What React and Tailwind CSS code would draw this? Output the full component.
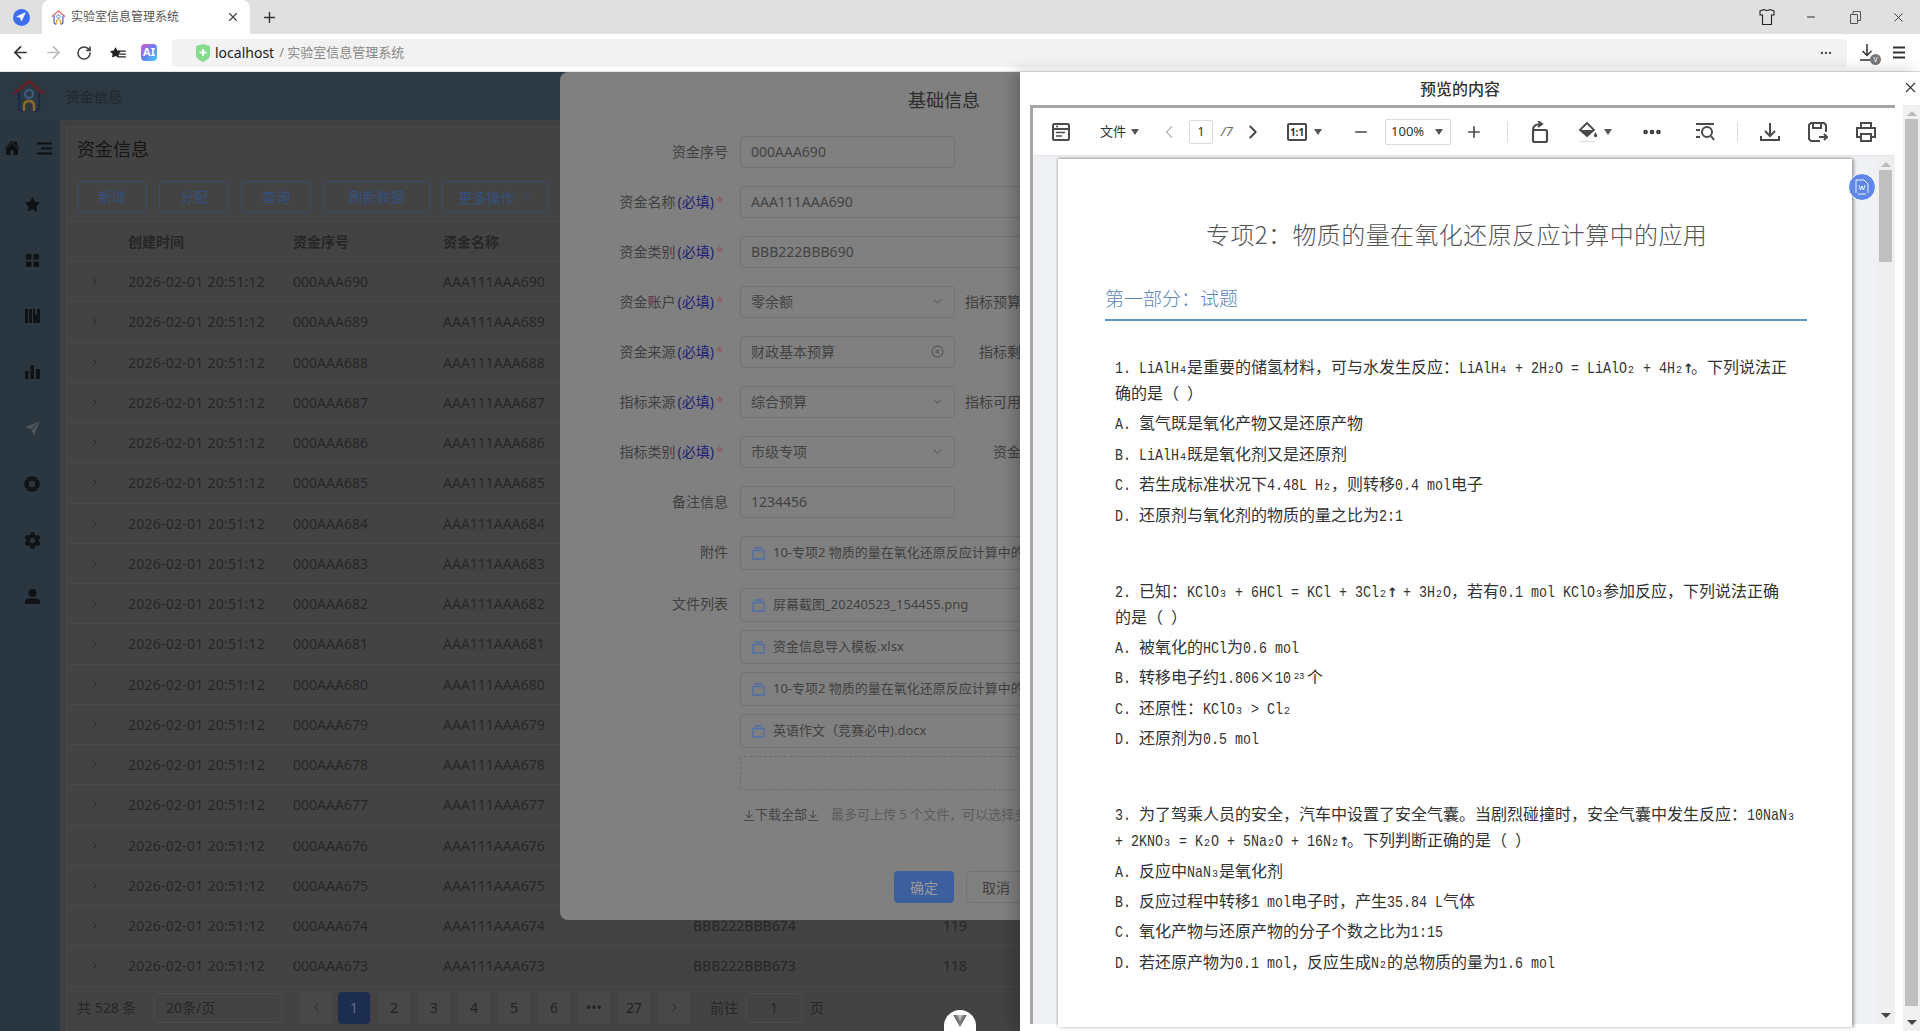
import { ArrowLeft, ArrowRight, RotateCw, Plus, X, ChevronDown, ChevronRight, ChevronLeft, Minus, Navigation, Ellipsis, CircleX, Menu } from 'lucide-react';
import { FaStar, FaCog } from 'react-icons/fa';
import { IoHome, IoPaperPlane } from 'react-icons/io5';
import { BsGridFill } from 'react-icons/bs';

const uiFont = 'font-["Noto_Sans","Noto_Sans_CJK_SC",sans-serif]';
const rows = Array.from({ length: 18 }, (_, i) => 690 - i);
const pages = ['2', '3', '4', '5', '6', '•••', '27'];

function Logo({ size = 34, dim = false }) {
  const c = dim ? ['#6b1f22', '#1c2a52', '#8a6a2a', '#3c5878'] : ['#e04545', '#3050a0', '#e8a030', '#7aa5d5'];
  return (
    <svg width={size} height={size} viewBox="0 0 34 34" fill="none" strokeWidth="2.4">
      <path d="M2 15 17 2l15 13" stroke={c[0]} />
      <path d="M7 13v15q0 4 5 4M27 13v15q0 4-5 4" stroke={c[1]} />
      <circle cx="17" cy="15" r="4" stroke={c[3]} />
      <path d="M12 32v-5q0-5 5-5t5 5v5" stroke={c[2]} />
    </svg>
  );
}

function BrowserChrome() {
  return (
    <div className="shrink-0">
      <div className="flex h-[34px] items-end bg-[#e0e0e0]">
        <div className="flex h-[34px] w-[42px] items-center justify-center">
          <div className="flex h-[17px] w-[17px] items-center justify-center rounded-full bg-[#3d6df0]">
            <Navigation className="h-[10px] w-[10px] fill-white text-white" />
          </div>
        </div>
        <div className="flex h-[34px] w-[208px] items-center rounded-t-[8px] bg-white pl-[9px] pr-[10px]">
          <Logo size={15} />
          <span className="ml-[5px] flex-1 text-[12px] text-[#555]">实验室信息管理系统</span>
          <X className="h-[14px] w-[14px] text-[#444]" />
        </div>
        <div className="flex h-[34px] w-[38px] items-center justify-center">
          <Plus className="h-[17px] w-[17px] text-[#333]" />
        </div>
        <div className="flex-1" />
        <div className="flex h-[34px] items-center text-[#333]">
          <svg width="16" height="18" viewBox="0 0 16 18" fill="none" stroke="#222" strokeWidth="1.1" className="mr-[30px]">
            <path d="M5 1.5 1 3v4h2.5v9.5h9V7H15V3l-4-1.5q-3 2-6 0Z" />
          </svg>
          <Minus className="mr-[33px] h-[12px] w-[12px]" />
          <svg width="11" height="13" viewBox="0 0 11 13" fill="none" stroke="#555" className="mr-[30px]">
            <path d="M.5 3.5h7v9h-7zM3 3.5v-3h7.500v9h-3" />
          </svg>
          <X className="mr-[14px] h-[15px] w-[15px]" strokeWidth={1.5} />
        </div>
      </div>
      <div className="flex h-[37px] items-center bg-white">
        <div className="flex w-[172px] items-center pl-[11px]">
          <ArrowLeft className="h-[19px] w-[19px] text-[#333]" strokeWidth={2.2} />
          <ArrowRight className="ml-[14px] h-[19px] w-[19px] text-[#bbb]" strokeWidth={2.2} />
          <RotateCw className="ml-[13px] h-[16px] w-[16px] text-[#444]" strokeWidth={2.4} />
          <span className="relative ml-[18px] flex h-[16px] w-[16px] items-center">
            <FaStar className="h-[11px] w-[11px] text-[#222]" />
            <Menu className="absolute left-[7px] top-[4px] h-[10px] w-[10px] text-[#222]" strokeWidth={3} />
          </span>
          <span className="ml-[15px] flex h-[17px] w-[16px] items-center justify-center rounded-[4px] bg-gradient-to-br from-[#d050d0] via-[#6080f0] to-[#40d0f0] text-[11px] font-bold text-white">AI</span>
        </div>
        <div className="flex h-[28px] w-[1675px] items-center justify-between rounded-[4px] bg-[#f2f2f2] pl-[24px] pr-[14px]">
          <div className="flex items-center">
            <svg width="14" height="18" viewBox="0 0 14 18" className="mr-[5px]">
              <path d="M0 2 7 0l7 2v9q0 4-7 7-7-3-7-7Z" fill="#86dc8e" />
              <path d="M7 5v7M3.500 8.500h7" stroke="#fff" strokeWidth="2" />
            </svg>
            <span className="text-[14px] text-[#222]">localhost</span>
            <span className="ml-[5px] text-[13px] text-[#888]">/ 实验室信息管理系统</span>
          </div>
          <Ellipsis className="h-[14px] w-[14px] text-[#444]" />
        </div>
        <div className="relative ml-[12px] h-[20px] w-[20px]">
          <svg width="18" height="20" viewBox="0 0 18 20" fill="none" stroke="#333" strokeWidth="1.500">
            <path d="M8 1v11M3.500 8 8 12.500 12.500 8M1 17h10" />
          </svg>
          <span className="absolute bottom-[-2px] right-[-2px] flex h-[11px] w-[11px] items-center justify-center rounded-full bg-[#777] text-[8px] leading-none text-white">v</span>
        </div>
        <svg width="14" height="13" viewBox="0 0 14 13" stroke="#333" strokeWidth="2" className="ml-[13px]">
          <path d="M1 1.500h12M1 6.500h12M1 11.500h12" />
        </svg>
      </div>
      <div className="h-[1px] bg-[#e4e4e4]" />
    </div>
  );
}

function Sidebar() {
  const icon = 'flex h-[56px] w-full items-center justify-center pl-[4px] text-[#0f1316]';
  return (
    <div className="w-[60px] shrink-0 bg-[#2b3740]">
      <div className="flex h-[56px] items-center pl-[4px]">
        <IoHome className="h-[16px] w-[16px] text-[#0c1013]" />
        <svg width="15" height="13" viewBox="0 0 15 13" stroke="#0c1013" strokeWidth="2" className="ml-[17px]">
          <path d="M0 1.500h15M4 6.500h11M0 11.500h15" />
        </svg>
      </div>
      <div className={icon}><FaStar className="h-[15px] w-[15px]" /></div>
      <div className={icon}><BsGridFill className="h-[15px] w-[15px]" /></div>
      <div className={icon}>
        <svg width="15" height="14" viewBox="0 0 15 14" fill="currentColor"><path d="M0 0h3v14H0zM4 0h3v14H4zM8 0h2v6l1-1 1 1V0h3v14H8z" /></svg>
      </div>
      <div className={icon}>
        <svg width="15" height="14" viewBox="0 0 15 14" fill="currentColor"><path d="M0 6h3.500v8H0zM5.500 0H9v14H5.500zM11 4h4v10h-4z" /></svg>
      </div>
      <div className={icon}><IoPaperPlane className="h-[15px] w-[15px] text-[#4b555d]" /></div>
      <div className={icon}>
        <svg width="16" height="16" viewBox="0 0 16 16" fill="none">
          <circle cx="8" cy="8" r="5.500" stroke="currentColor" strokeWidth="4.500" />
          <path d="m2.500 2.500 2 2M13.500 2.500l-2 2M2.500 13.500l2-2M13.500 13.500l-2-2" stroke="#2b3740" strokeWidth="0.800" />
        </svg>
      </div>
      <div className={icon}><FaCog className="h-[17px] w-[17px]" /></div>
      <div className={icon}>
        <svg width="15" height="15" viewBox="0 0 15 15" fill="currentColor"><circle cx="7.500" cy="4" r="4" /><path d="M0 15v-2q0-3.500 4-3.500h7q4 0 4 3.500v2z" /></svg>
      </div>
    </div>
  );
}

function TableArea() {
  const buttons = [['新增', 'w-[70px]'], ['分配', 'w-[70px]'], ['查询', 'w-[70px]'], ['刷新数据', 'w-[107px]']];
  const grid = 'grid grid-cols-[61px_165px_150px_250px_250px_300px] items-center';
  return (
    <div className="flex min-w-0 flex-1 flex-col bg-[#404040] pl-[6px] pt-[6px]">
      <div className="flex flex-1 flex-col border-l border-t border-[#484848] bg-[#434343]">
        <div className="pl-[10px] pt-[9px]">
          <h1 className="text-[18px] leading-[27px] text-[#161616]">资金信息</h1>
          <div className="mt-[18px] flex gap-[12px]">
            {buttons.map(([b, w]) => (
              <div key={b} className={`flex h-[32px] ${w} items-center justify-center rounded-[4px] border border-[#3b4d69] pb-[1px] text-[14px] text-[#34517f]`}>{b}</div>
            ))}
            <div className="flex h-[32px] w-[107px] items-center justify-center gap-[6px] rounded-[4px] border border-[#3b4d69] text-[14px] text-[#34517f]">
              更多操作<ChevronDown className="h-[12px] w-[12px]" />
            </div>
          </div>
        </div>
        <div className="mt-[8px] border-t border-[#494949]">
          <div className={`${grid} h-[40px] border-b border-[#494949] text-[14px] font-bold text-[#262626]`}>
            <span />
            <span>创建时间</span>
            <span>资金序号</span>
            <span>资金名称</span>
            <span>资金类别</span>
            <span>序号</span>
          </div>
          {rows.map((n) => (
            <div key={n} className={`${grid} h-[40.25px] border-b border-[#494949] text-[14px] text-[#262626]`}>
              <ChevronRight className="ml-[21px] h-[13px] w-[13px] text-[#222]" strokeWidth={1.5} />
              <span className="whitespace-nowrap tracking-[0.25px]">2026-02-01 20:51:12</span>
              <span>000AAA{n}</span>
              <span>AAA111AAA{n}</span>
              <span>BBB222BBB{n}</span>
              <span>{n - 555}</span>
            </div>
          ))}
        </div>
        <div className="mt-[5px] flex h-[32px] items-center pl-[10px] text-[14px] text-[#262626]">
          <span className="w-[77px] whitespace-nowrap">共 528 条</span>
          <div className="flex h-[30px] w-[128px] items-center justify-between rounded-[4px] border border-[#4c4c4c] px-[11px]">
            20条/页<ChevronDown className="h-[12px] w-[12px] text-[#333]" />
          </div>
          <div className="ml-[18px] flex h-[32px] w-[32px] items-center justify-center rounded-sm bg-[#484848]"><ChevronLeft className="h-[13px] w-[13px] text-[#333]" /></div>
          <div className="ml-[6px] flex h-[32px] w-[32px] items-center justify-center rounded-sm bg-[#1d2d50] text-[#5d6d8d]">1</div>
          {pages.map((p) => (
            <div key={p} className="ml-[8px] flex h-[32px] w-[32px] items-center justify-center rounded-sm bg-[#484848] text-[#222]">{p}</div>
          ))}
          <div className="ml-[8px] flex h-[32px] w-[32px] items-center justify-center rounded-sm bg-[#484848]"><ChevronRight className="h-[13px] w-[13px] text-[#333]" /></div>
          <span className="ml-[20px]">前往</span>
          <div className="ml-[8px] flex h-[30px] w-[56px] items-center justify-center rounded-[4px] border border-[#4c4c4c]">1</div>
          <span className="ml-[8px]">页</span>
        </div>
      </div>
    </div>
  );
}

function Field({ label, required, children }) {
  return (
    <div className="flex items-start">
      <div className="flex h-[32px] w-[168px] shrink-0 items-center justify-end whitespace-nowrap pb-[2px] text-[14px] text-[#3f3f3f]">
        {label}
        {required && <span className="ml-[2px] text-[#1f1f7c]">(必填)</span>}
        {required && <span className="ml-[2px] w-[12px] text-[#8e5a5a]">*</span>}
      </div>
      <div className="ml-[12px] min-w-0 flex-1">{children}</div>
    </div>
  );
}

const box = 'flex h-[32px] items-center rounded-[4px] border border-[#737373] px-[10px] pb-[2px] text-[14px] text-[#434343]';

function Side({ pad, text }) {
  return <div className={`whitespace-nowrap ${pad} pb-[2px] text-[14px] text-[#3f3f3f]`}>{text}</div>;
}

function Half({ children, focus, icon }) {
  return (
    <div className={`${box} w-[215px] justify-between ${focus ? 'border-[#5c5c5c]' : ''}`}>
      <span>{children}</span>
      {icon ?? <ChevronDown className="h-[13px] w-[13px] text-[#5e5e5e]" />}
    </div>
  );
}

function FileItem({ name }) {
  return (
    <div className="flex h-[34px] items-center rounded-[4px] border border-[#737373] pl-[11px] text-[13px] text-[#404040]">
      <svg width="13" height="13" viewBox="0 0 13 13" fill="none" stroke="#4e6ea8" strokeWidth="1.300" className="mr-[8px] shrink-0">
        <path d="M1 3.500h11V12H1zM2.500 1h8" />
      </svg>
      <span className="whitespace-nowrap">{name}</span>
    </div>
  );
}

function DownIcon() {
  return (
    <svg width="10" height="11" viewBox="0 0 10 11" fill="none" stroke="#454545" className="shrink-0">
      <path d="M5 0v7.500M1.500 4.500 5 8l3.500-3.500M0 10.500h10" />
    </svg>
  );
}

function FormDialog() {
  const longName = '10-专项2 物质的量在氧化还原反应计算中的应用.pdf';
  return (
    <div className="absolute left-[560px] top-[72px] h-[848px] w-[768px] rounded-[8px] bg-[#808080]">
      <div className="h-[64px] pt-[16px] text-center text-[18px] leading-[24px] text-[#2c2c2c]">基础信息</div>
      <div className="flex flex-col gap-[18px]">
        <Field label="资金序号"><div className={`${box} w-[215px]`}>000AAA690</div></Field>
        <Field label="资金名称" required><div className={box}>AAA111AAA690</div></Field>
        <Field label="资金类别" required><div className={box}>BBB222BBB690</div></Field>
        <Field label="资金账户" required>
          <div className="flex items-center"><Half>零余额</Half><Side pad="pl-[10px]" text="指标预算金额" /></div>
        </Field>
        <Field label="资金来源" required>
          <div className="flex items-center">
            <Half focus icon={<CircleX className="h-[13px] w-[13px] text-[#555]" />}>财政基本预算</Half>
            <Side pad="pl-[24px]" text="指标剩余金额" />
          </div>
        </Field>
        <Field label="指标来源" required>
          <div className="flex items-center"><Half>综合预算</Half><Side pad="pl-[10px]" text="指标可用金额" /></div>
        </Field>
        <Field label="指标类别" required>
          <div className="flex items-center"><Half>市级专项</Half><Side pad="pl-[38px]" text="资金余额" /></div>
        </Field>
        <Field label="备注信息"><div className={`${box} w-[215px]`}>1234456</div></Field>
        <Field label="附件"><FileItem name={longName} /></Field>
      </div>
      <div className="mt-[18px]">
        <Field label="文件列表">
          <div className="flex flex-col gap-[8px]">
            <FileItem name="屏幕截图_20240523_154455.png" />
            <FileItem name="资金信息导入模板.xlsx" />
            <FileItem name={longName} />
            <FileItem name="英语作文（竞赛必中).docx" />
            <div className="h-[34px] rounded-[4px] border border-dashed border-[#6e6e6e]" />
          </div>
          <div className="mt-[14px] flex h-[22px] items-center whitespace-nowrap pl-[4px] text-[13px] text-[#5c5c5c]">
            <span className="flex w-[87px] items-center gap-[1px] text-[#454545]"><DownIcon />下载全部<DownIcon /></span>
            最多可上传 5 个文件，可以选择多个文件上传
          </div>
        </Field>
      </div>
      <div className="mt-[45px] flex pl-[334px]">
        <div className="flex h-[32px] w-[60px] items-center justify-center rounded-[4px] bg-[#3e5f9e] text-[14px] text-[#9a9a9a]">确定</div>
        <div className="ml-[12px] flex h-[32px] w-[60px] items-center justify-center rounded-[4px] border border-[#737373] text-[14px] text-[#3f3f3f]">取消</div>
      </div>
    </div>
  );
}

// 宋体半角：拉丁字符单独一段，宽度正好是汉字的一半
function DocText({ text }) {
  const parts = text.match(/[\x20-\x7e]+|[₂₃₄]|²³|↑|[^\x20-\x7e₂₃₄²³↑]+/g) ?? [];
  const subs = { '₂': '2', '₃': '3', '₄': '4' };
  return parts.map((p, i) => {
    if (subs[p]) return <span key={i} className='inline-block w-[8px] text-center font-["Liberation_Mono",monospace] text-[10px] leading-none'>{subs[p]}</span>;
    if (p === '²³') return <span key={i} className='inline-block w-[16px] -translate-y-[4px] text-center font-["Liberation_Mono",monospace] text-[9px] leading-none'>23</span>;
    if (p === '↑') return <span key={i} className='inline-block w-[8px] text-center font-["DejaVu_Sans",sans-serif] text-[13px] font-bold leading-none'>↑</span>;
    if (/^[\x20-\x7e]/.test(p)) return <span key={i} className='inline-block origin-[50%_80%] scale-y-[1.2] font-["Liberation_Mono",monospace] text-[13.33px] leading-none'>{p}</span>;
    return <span key={i}>{p}</span>;
  });
}

const questions = [
  {
    stem: ['1. LiAlH₄是重要的储氢材料，可与水发生反应：LiAlH₄ + 2H₂O = LiAlO₂ + 4H₂↑。下列说法正', '确的是（ ）'],
    opts: ['A. 氢气既是氧化产物又是还原产物', 'B. LiAlH₄既是氧化剂又是还原剂', 'C. 若生成标准状况下4.48L H₂，则转移0.4 mol电子', 'D. 还原剂与氧化剂的物质的量之比为2:1'],
  },
  {
    stem: ['2. 已知：KClO₃ + 6HCl = KCl + 3Cl₂↑ + 3H₂O，若有0.1 mol KClO₃参加反应，下列说法正确', '的是（ ）'],
    opts: ['A. 被氧化的HCl为0.6 mol', 'B. 转移电子约1.806×10²³个', 'C. 还原性：KClO₃ > Cl₂', 'D. 还原剂为0.5 mol'],
  },
  {
    stem: ['3. 为了驾乘人员的安全，汽车中设置了安全气囊。当剧烈碰撞时，安全气囊中发生反应：10NaN₃', '+ 2KNO₃ = K₂O + 5Na₂O + 16N₂↑。下列判断正确的是（ ）'],
    opts: ['A. 反应中NaN₃是氧化剂', 'B. 反应过程中转移1 mol电子时，产生35.84 L气体', 'C. 氧化产物与还原产物的分子个数之比为1:15', 'D. 若还原产物为0.1 mol，反应生成N₂的总物质的量为1.6 mol'],
  },
];

function Tri({ cls = '' }) {
  return <span className={`h-0 w-0 shrink-0 border-x-[4px] border-t-[6px] border-x-transparent border-t-[#555] ${cls}`} />;
}

function ToolIcon({ children, w = 20, h = 20, vb = '0 0 20 20', cls = '' }) {
  return (
    <svg width={w} height={h} viewBox={vb} fill="none" stroke="#4a4a4a" strokeWidth="2" className={`shrink-0 ${cls}`}>
      {children}
    </svg>
  );
}

function PdfToolbar() {
  return (
    <div className="flex h-[48px] items-center border-b border-[#e4e4e4] bg-white pl-[19px] text-[#333]">
      <ToolIcon vb="0 0 18 18" w={18} h={18}>
        <rect x="1" y="1" width="16" height="16" rx="1.500" /><path d="M1 6h16" /><path d="M4 3.500h2M4 9.500h9M4 13h6" strokeWidth="1.500" />
      </ToolIcon>
      <span className="ml-[30px] text-[13px]">文件</span>
      <Tri cls="ml-[5px]" />
      <ChevronLeft className="ml-[20px] h-[20px] w-[20px] text-[#bdbdbd]" strokeWidth={2} />
      <div className="ml-[10px] flex h-[24px] w-[24px] items-center justify-center rounded-[2px] border border-[#dcdcdc] text-[13px]">1</div>
      <span className="ml-[8px] w-[14px] text-[13px] italic text-[#666]">/7</span>
      <ChevronRight className="ml-[7px] h-[22px] w-[22px] text-[#444]" strokeWidth={2} />
      <div className="ml-[23px] flex h-[18px] w-[20px] items-center justify-center rounded-[2px] border-2 border-[#4a4a4a] text-[10px] font-bold leading-none">1:1</div>
      <Tri cls="ml-[7px]" />
      <Minus className="ml-[30px] h-[18px] w-[18px] text-[#4a4a4a]" strokeWidth={2.200} />
      <div className="ml-[15px] flex h-[26px] w-[66px] items-center justify-between rounded-[2px] border border-[#dcdcdc] pl-[5px] pr-[7px] text-[13px]">100%<Tri /></div>
      <Plus className="ml-[14px] h-[18px] w-[18px] text-[#4a4a4a]" strokeWidth={2.200} />
      <div className="ml-[24px] h-[20px] w-[1px] shrink-0 bg-[#dcdcdc]" />
      <ToolIcon w={20} h={22} vb="0 0 20 22" cls="ml-[22px]">
        <rect x="3" y="9" width="14" height="12" rx="1.500" strokeWidth="2.200" /><path d="M3 9q0-6 8-6M8 0l4 3-4 3" />
      </ToolIcon>
      <svg width="20" height="22" viewBox="0 0 20 22" className="ml-[28px] shrink-0">
        <path d="M9 2 2 9l7 6 7-6Z" fill="none" stroke="#4a4a4a" strokeWidth="1.800" /><path d="M2 9h14l-7 6Z" fill="#4a4a4a" /><path d="M17.500 11l1.500 3a1.600 1.600 0 1 1-3 0Z" fill="#4a4a4a" /><path d="M1 20.500h16" stroke="#e4e4ee" strokeWidth="2" />
      </svg>
      <Tri cls="ml-[6px]" />
      <Ellipsis className="ml-[29px] h-[22px] w-[22px] text-[#333]" strokeWidth={3} />
      <ToolIcon cls="ml-[32px]">
        <path d="M1 2h18M1 8h4M1 15h4" /><circle cx="12" cy="10" r="5" /><path d="m16 14 3 4" />
      </ToolIcon>
      <div className="ml-[22px] h-[20px] w-[1px] shrink-0 bg-[#dcdcdc]" />
      <ToolIcon cls="ml-[22px]">
        <path d="M10 1v13M5 9l5 5 5-5M1 14v4h18v-4" />
      </ToolIcon>
      <ToolIcon cls="ml-[28px]">
        <path d="M18 10V3l-2-2H3L1 3v14l2 2h9M5 1v5h8V1M11 15h8M16 12l3 3-3 3" />
      </ToolIcon>
      <ToolIcon cls="ml-[28px]">
        <path d="M5 6V1h10v5M5 15H1V6h18v9h-4" /><path d="M5 12h10v7H5z" />
      </ToolIcon>
    </div>
  );
}

function ScrollTrack({ cls, thumb }) {
  return (
    <div className={`flex flex-col items-center pb-[6px] pt-[6px] ${cls}`}>
      <span className="h-0 w-0 border-x-[5px] border-b-[5px] border-x-transparent border-b-[#bbb]" />
      <div className={`mt-[3px] w-[13px] bg-[#bfbfbf] ${thumb}`} />
      <div className="flex-1" />
      <span className="h-0 w-0 border-x-[5px] border-t-[5px] border-x-transparent border-t-[#444]" />
    </div>
  );
}

function PreviewDrawer() {
  return (
    <div className="absolute bottom-0 left-[1020px] right-0 top-[72px] bg-white pl-[10px] shadow-[-6px_0_14px_rgba(0,0,0,0.22)]">
      <div className="flex h-[33px] w-[860px] items-center justify-center text-[16px] font-medium leading-none text-[#333]">
        预览的内容
      </div>
      <X className="absolute right-[1px] top-[7px] h-[17px] w-[17px] text-[#333]" strokeWidth={1.500} />
      <div className="flex h-[926px]">
        <div className="flex h-[919px] w-[865px] flex-col border-l-[3px] border-t-[3px] border-[#a6a6a6]">
          <PdfToolbar />
          <div className="flex min-h-0 flex-1 bg-[#f0f1f5]">
            <div className="ml-[25px] mt-[3px] h-full w-[794px] overflow-hidden bg-white pl-[47px] pt-[57px] text-[16px] text-[#333] shadow-[2px_0_3px_rgba(0,0,0,0.35),-1px_-1px_2px_rgba(0,0,0,0.2)] font-['Noto_Sans_CJK_SC',sans-serif]">
              <div className="whitespace-nowrap pl-[101px] text-[24px] font-light leading-[36px] tracking-[0.4px] text-[#555]">专项2：物质的量在氧化还原反应计算中的应用</div>
              <div className="mt-[32px] w-[702px] border-b-2 border-[#5f8fcc] pb-[7px] text-[19px] font-light leading-[28px] text-[#5b84b8]">第一部分：试题</div>
              <div className="pl-[10px] pt-[32px] leading-[26px]">
                {questions.map((q, i) => (
                  <div key={i} className={i ? 'mt-[50px]' : ''}>
                    {q.stem.map((s) => <div key={s} className="whitespace-pre"><DocText text={s} /></div>)}
                    {q.opts.map((o) => <div key={o} className="mt-[4.400px] whitespace-pre"><DocText text={o} /></div>)}
                  </div>
                ))}
              </div>
            </div>
            <div className="w-[25px]" />
            <ScrollTrack cls="w-[17px] bg-[#efefef]" thumb="h-[92px]" />
          </div>
        </div>
        <ScrollTrack cls="ml-[8px] h-[926px] w-[17px] bg-[#f0f0f0]" thumb="h-[887px]" />
      </div>
      <div className="absolute left-[828px] top-[101px] flex h-[28px] w-[28px] items-center justify-center rounded-full border border-white bg-[#5f87e8]">
        <svg width="14" height="16" viewBox="0 0 14 16" fill="none" stroke="#fff" strokeWidth="0.900">
          <path d="M1 14V1h8l4 4v9M3 15h8" /><path d="m4 6 1.500 5L7 7l1.500 4L10 6" />
        </svg>
      </div>
    </div>
  );
}

export default function App() {
  return (
    <div className={`relative flex h-[1031px] w-[1920px] flex-col overflow-hidden ${uiFont}`}>
      <BrowserChrome />
      <div className="flex h-[48px] shrink-0 items-center bg-[#2c3943] pl-[12px]">
        <Logo dim />
        <span className="ml-[20px] text-[14px] text-[#20272c]">资金信息</span>
      </div>
      <div className="flex min-h-0 flex-1">
        <Sidebar />
        <TableArea />
      </div>
      <FormDialog />
      <div className="absolute bottom-0 left-[944px] flex h-[21px] w-[32px] items-start justify-center rounded-t-full bg-white pt-[5px]">
        <svg width="14" height="12" viewBox="0 0 14 12"><path d="M0 0h14L7 12Z" fill="#777" /><path d="M4 0h6L7 6Z" fill="#bbb" /></svg>
      </div>
      <PreviewDrawer />
    </div>
  );
}
